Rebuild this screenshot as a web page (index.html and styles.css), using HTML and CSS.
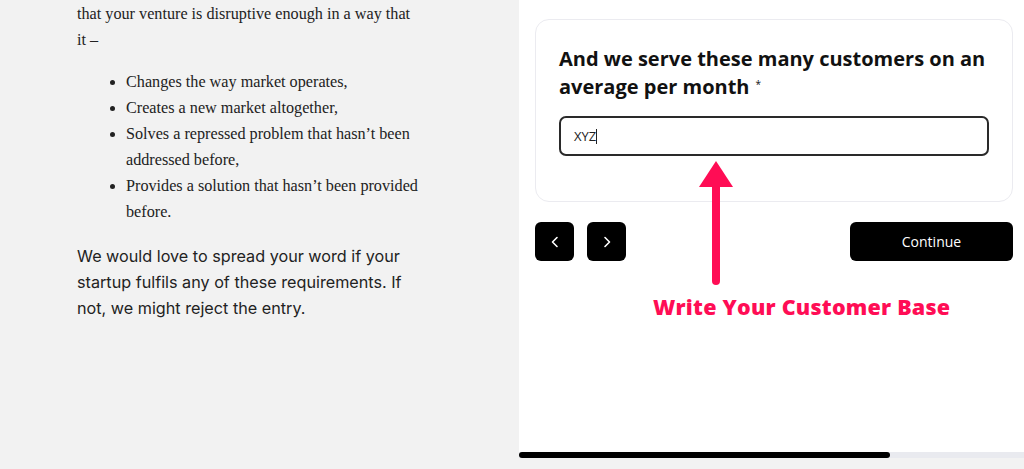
FILE: index.html
```html
<!DOCTYPE html>
<html lang="en">
<head>
<meta charset="utf-8">
<title>Form</title>
<link rel="stylesheet" href="styles.css">
</head>
<body>
<div class="page">
  <main class="article">
    <p class="serif">that your venture is disruptive enough in a way that it –</p>
    <ul class="serif list">
      <li>Changes the way market operates,</li>
      <li>Creates a new market altogether,</li>
      <li>Solves a repressed problem that hasn’t been addressed before,</li>
      <li>Provides a solution that hasn’t been provided before.</li>
    </ul>
    <p class="sans">We would love to spread your word if your startup fulfils any of these requirements. If not, we might reject the entry.</p>
  </main>
  <aside class="form-side">
    <div class="form-area">
      <section class="card">
        <h2 class="question"><span class="q-line">And we serve these many customers on an</span><span class="q-line">average per month<span class="req">*</span></span></h2>
        <div class="field"><span class="value">XYZ</span><span class="caret"></span></div>
      </section>
      <div class="nav">
        <div class="nav-arrows">
          <button class="icon-btn" aria-label="Previous">
            <svg width="12" height="14" viewBox="0 0 12 14"><path d="M8 2.5 L3.5 7 L8 11.5" fill="none" stroke="#fff" stroke-width="1.6" stroke-linecap="round" stroke-linejoin="round"/></svg>
          </button>
          <button class="icon-btn" aria-label="Next">
            <svg width="12" height="14" viewBox="0 0 12 14"><path d="M4 2.5 L8.5 7 L4 11.5" fill="none" stroke="#fff" stroke-width="1.6" stroke-linecap="round" stroke-linejoin="round"/></svg>
          </button>
        </div>
        <button class="continue">Continue</button>
      </div>
      <svg class="pointer" width="40" height="130" viewBox="0 0 40 130">
        <line x1="20" y1="22" x2="20" y2="120" stroke="#ff0d55" stroke-width="8" stroke-linecap="round"/>
        <polygon points="20,0 37,26 3,26" fill="#ff0d55"/>
      </svg>
      <div class="hint">Write Your Customer Base</div>
    </div>
    <div class="progress"><div class="progress-fill" style="width:371px"></div></div>
  </aside>
</div>
</body>
</html>
```

FILE: styles.css
```css
html, body {
  margin: 0;
  padding: 0;
}
body {
  background: #f2f2f2;
  width: 1024px;
  height: 469px;
  overflow: hidden;
}
.page {
  display: flex;
  height: 469px;
}
.article {
  width: 343px;
  padding: 1px 0 0 77px;
  flex: 0 0 auto;
  margin-right: 99px;
}
.serif {
  font-family: "Liberation Serif", "Times New Roman", serif;
  font-size: 16.2px;
  line-height: 26px;
  color: #222;
}
.article p {
  margin: 0;
}
.list {
  margin: 16px 0 0 0;
  padding-left: 49px;
}
.sans {
  font-family: Inter, "Liberation Sans", sans-serif;
  font-size: 16.2px;
  line-height: 26px;
  color: #222;
  margin-top: 18px !important;
}
.form-side {
  width: 505px;
  flex: 0 0 auto;
  display: flex;
  flex-direction: column;
}
.form-area {
  position: relative;
  background: #fff;
  height: 452px;
  padding: 19px 11px 0 16px;
  box-sizing: border-box;
}
.card {
  border: 1px solid #ebebf0;
  border-radius: 14px;
  height: 183px;
  box-sizing: border-box;
  padding: 25px 23px 0 23px;
}
.question {
  margin: 0;
  font-family: "Open Sans", "Liberation Sans", sans-serif;
  font-weight: 700;
  font-size: 20px;
  line-height: 27.5px;
  color: #111;
}
.q-line {
  display: block;
  white-space: nowrap;
}
.req {
  display: inline-block;
  font-size: 10px;
  line-height: 10px;
  font-weight: 400;
  margin-left: 6px;
  vertical-align: 6px;
}
.field {
  margin-top: 16px;
  height: 40px;
  border: 2px solid #2a2a2a;
  border-radius: 7px;
  box-sizing: border-box;
  display: flex;
  align-items: center;
  padding-left: 13px;
  font-family: "Open Sans", "Liberation Sans", sans-serif;
  font-size: 13px;
  color: #222;
}
.caret {
  display: inline-block;
  width: 1px;
  height: 15px;
  background: #222;
}
.nav {
  margin-top: 20px;
  display: flex;
  justify-content: space-between;
  align-items: center;
}
.nav-arrows {
  display: flex;
  gap: 13px;
}
.icon-btn {
  width: 39px;
  height: 39px;
  border: 0;
  border-radius: 6px;
  background: #000;
  display: flex;
  align-items: center;
  justify-content: center;
  padding: 0;
}
.continue {
  width: 163px;
  height: 39px;
  border: 0;
  border-radius: 6px;
  background: #000;
  color: #fff;
  font-family: "Open Sans", "Liberation Sans", sans-serif;
  font-size: 14px;
  padding: 0;
}
.pointer {
  position: absolute;
  left: 177px;
  top: 161px;
}
.hint {
  position: absolute;
  left: 134px;
  top: 293px;
  font-family: "Open Sans", "Liberation Sans", sans-serif;
  font-weight: 800;
  font-size: 21.5px;
  letter-spacing: 0.22px;
  line-height: 28px;
  color: #ff0d55;
  white-space: nowrap;
}
.progress {
  height: 6px;
  background: #e9eaef;
}
.progress-fill {
  height: 6px;
  background: #000;
  border-radius: 3px;
}
```
